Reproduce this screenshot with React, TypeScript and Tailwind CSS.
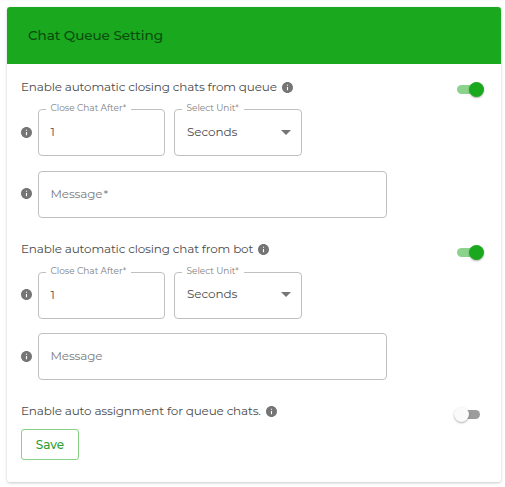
import React from "react";

function InfoIcon({ className = "" }: { className?: string }) {
  return (
    <svg viewBox="2 2 20 20" className={`h-[11px] w-[11px] shrink-0 fill-[#757575] ${className}`}>
      <path d="M12 2C6.48 2 2 6.48 2 12s4.48 10 10 10 10-4.48 10-10S17.52 2 12 2zm1 15h-2v-6h2v6zm0-8h-2V7h2v2z" />
    </svg>
  );
}

function Toggle({ on, className }: { on: boolean; className: string }) {
  return (
    <div className={`relative h-[15px] w-[23px] shrink-0 ${className}`}>
      <div className={`absolute top-[3px] h-[9px] w-[23px] rounded-full ${on ? "bg-[#8bd38d]" : "bg-[#9c9c9c]"}`} />
      <div
        className={`absolute top-0 h-[15px] w-[15px] rounded-full shadow-[0_1px_2px_rgba(0,0,0,0.32)] ${
          on ? "left-[11.5px] bg-[#19a81e]" : "left-[-3px] bg-[#fafafa]"
        }`}
      />
    </div>
  );
}

function SettingRow({ label, on, toggleClass }: { label: string; on: boolean; toggleClass: string }) {
  return (
    <div className="flex h-[22px] items-start justify-between pr-[7px]">
      <div className="flex h-4 items-center">
        <span className="text-[12px] leading-4 tracking-[-0.17px] whitespace-nowrap text-[#4c4c4c]">{label}</span>
        <InfoIcon className="ml-[5px]" />
      </div>
      <Toggle on={on} className={toggleClass} />
    </div>
  );
}

function Field({ label, width, children }: { label: string; width: string; children: React.ReactNode }) {
  return (
    <div className={`relative flex h-[47px] items-center rounded-[4px] border border-[#c0c0c0] pr-3 pb-px pl-[11.5px] text-[12px] text-[#4c4c4c] ${width}`}>
      <span className="absolute top-[-8px] left-[7px] bg-white pr-[5px] pl-[4.5px] text-[9px] leading-3 tracking-[-0.03px] whitespace-nowrap text-[#808080]">
        {label}
      </span>
      {children}
    </div>
  );
}

function QueueFields({ message, required = false }: { message: string; required?: boolean }) {
  return (
    <div className="flex flex-col">
      <div className="flex items-center">
        <InfoIcon className={`mr-[6px] ${required ? "" : "mb-[2px]"}`} />
        <Field label="Close Chat After*" width="w-[127px]">
          <span className={required ? "" : "pb-px"}>1</span>
        </Field>
        <div className="w-[9px]" />
        <Field label="Select Unit*" width="w-[128px]">
          <span className={`ml-[0.5px] tracking-[-0.1px] ${required ? "" : "pb-[2px]"}`}>Seconds</span>
          <span className={`mr-[-2px] ml-auto h-0 w-0 border-x-[5px] border-t-[5px] border-x-transparent border-t-[#757575] ${required ? "" : "mb-px"}`} />
        </Field>
      </div>
      <div className={`flex items-center ${required ? "mt-[15px]" : "mt-[14px]"}`}>
        <InfoIcon className={`mr-[6px] ${required ? "mb-[2px]" : "mb-px"}`} />
        <div className="flex h-[47px] w-[349px] items-center rounded-[4px] border border-[#c0c0c0] pr-3 pb-px pl-[11.5px] text-[12px] tracking-[-0.15px] text-[#7c7c7c]">
          {message}
          {required && <span className="ml-px">*</span>}
        </div>
      </div>
    </div>
  );
}

export default function App() {
  return (
    <div className="h-[487px] w-[505px] border-t border-[#fafafa] bg-white pt-[6px] pr-[4px] pl-[7px] font-['Montserrat','Inter',sans-serif]">
      <div className="h-[475px] w-[494px] overflow-hidden rounded-[3px] bg-white shadow-[0_1px_3px_rgba(0,0,0,0.22)]">
        <div className="flex h-[57px] items-center bg-[#19a81e] pl-[21px] text-[13.6px] font-medium tracking-[-0.1px] text-[#0b4d0d]">
          <span>Chat Queue Setting</span>
        </div>
        <div className="flex flex-col px-[14px] pt-[15px]">
          <div className="h-[162px]">
            <SettingRow label="Enable automatic closing chats from queue" on toggleClass="mt-[3px]" />
            <div className="mt-[8px]">
              <QueueFields message="Message" required />
            </div>
          </div>
          <div className="h-[162px]">
            <SettingRow label="Enable automatic closing chat from bot" on toggleClass="mt-[3.5px]" />
            <div className="mt-[9px]">
              <QueueFields message="Message" />
            </div>
          </div>
          <SettingRow label="Enable auto assignment for queue chats." on={false} toggleClass="mt-[4px]" />
          <button className="mt-[4px] h-[31px] w-[58px] rounded-[3px] border border-[#86d088] text-[12px] font-medium text-[#2fa033]">
            Save
          </button>
        </div>
      </div>
    </div>
  );
}
